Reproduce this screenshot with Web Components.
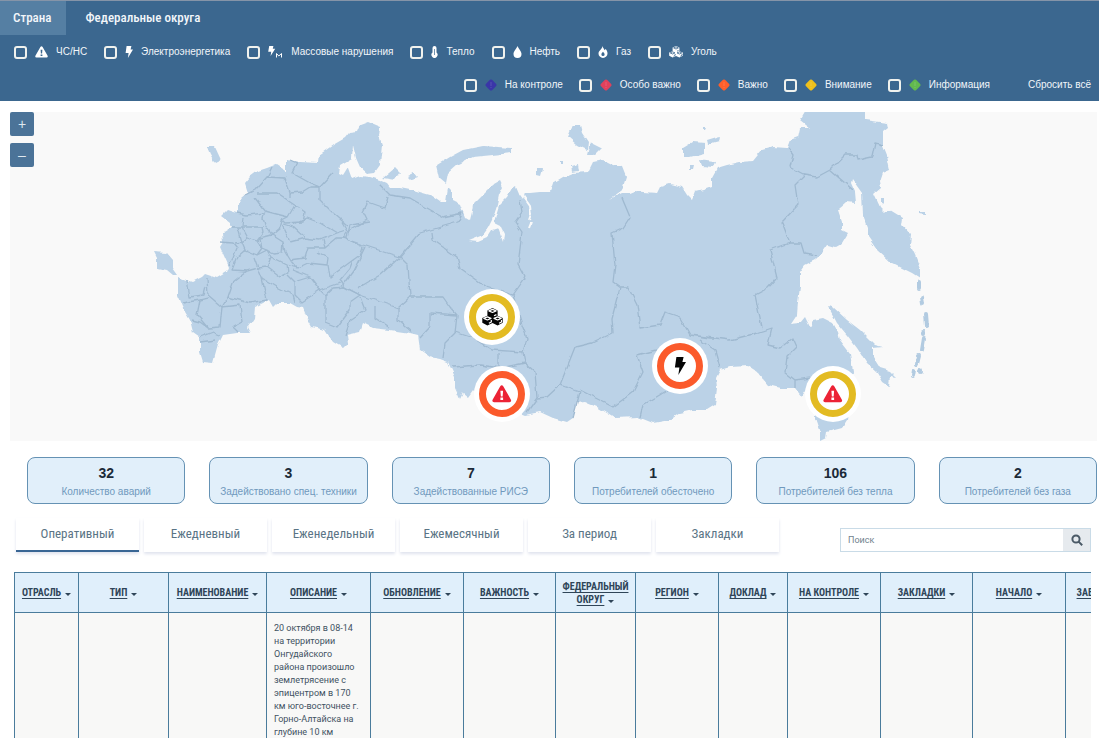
<!DOCTYPE html>
<html lang="ru">
<head>
<meta charset="utf-8">
<title>Карта аварий</title>
<style>
	html, body { margin: 0; height: 100%; }
	body {
		--narrow: "Roboto Condensed", "Liberation Sans Narrow", Roboto, sans-serif;
		--blue: #3b678f;
		background: #fff;
		font: 11px/14px "Liberation Sans", Arial, sans-serif;
	}
</style>
</head>
<body>
<energy-page>
	<page-header slot="header">
		<a slot="nav" href="#country" class="on">Страна</a>
		<a slot="nav" href="#districts">Федеральные округа</a>
		<filter-item slot="kinds" icon="warn">ЧС/НС</filter-item>
		<filter-item slot="kinds" icon="bolt">Электроэнергетика</filter-item>
		<filter-item slot="kinds" icon="mass">Массовые нарушения</filter-item>
		<filter-item slot="kinds" icon="heat">Тепло</filter-item>
		<filter-item slot="kinds" icon="oil">Нефть</filter-item>
		<filter-item slot="kinds" icon="gas">Газ</filter-item>
		<filter-item slot="kinds" icon="coal">Уголь</filter-item>
		<filter-item slot="levels" icon="level" tone="#3a36a8">На контроле</filter-item>
		<filter-item slot="levels" icon="level" tone="#e2405c">Особо важно</filter-item>
		<filter-item slot="levels" icon="level" tone="#ff5f2a">Важно</filter-item>
		<filter-item slot="levels" icon="level" tone="#eec01c">Внимание</filter-item>
		<filter-item slot="levels" icon="level" tone="#62b94e">Информация</filter-item>
	</page-header>

	<region-map slot="map">
		<map-pin x="482" y="205" icon="coal" ring="#e3bb22"></map-pin>
		<map-pin x="492" y="282" icon="warn" ring="#fb5a2b" tone="#ec2335"></map-pin>
		<map-pin x="670" y="254" icon="bolt" ring="#fb5a2b"></map-pin>
		<map-pin x="823" y="282" icon="warn" ring="#e3bb22" tone="#ec2335"></map-pin>
	</region-map>

	<stat-card slot="stats" value="32">Количество аварий</stat-card>
	<stat-card slot="stats" value="3">Задействовано спец. техники</stat-card>
	<stat-card slot="stats" value="7">Задействованные РИСЭ</stat-card>
	<stat-card slot="stats" value="1">Потребителей обесточено</stat-card>
	<stat-card slot="stats" value="106">Потребителей без тепла</stat-card>
	<stat-card slot="stats" value="2">Потребителей без газа</stat-card>

	<tab-button slot="tabs" class="on">Оперативный</tab-button>
	<tab-button slot="tabs">Ежедневный</tab-button>
	<tab-button slot="tabs">Еженедельный</tab-button>
	<tab-button slot="tabs">Ежемесячный</tab-button>
	<tab-button slot="tabs">За период</tab-button>
	<tab-button slot="tabs">Закладки</tab-button>

	<search-box slot="search"></search-box>
	<report-table slot="table"></report-table>
</energy-page>

<script>
"use strict";
/* == [ icons ] == each one is [ width, height, markup ] == */
const ICONS = {
	warn: [ 13, 12, `<path fill="currentColor" fill-rule="evenodd" d="M5.4 1Q6.5-.6 7.6 1L12.6 9.8Q13.2 11.4 11.6 11.5H1.4Q-.2 11.4.4 9.8ZM5.6 3.8L5.9 7.6H7.1L7.4 3.8ZM5.6 8.4V10H7.4V8.4Z"/>` ],
	bolt: [ 8, 12, `<path fill="currentColor" d="M1.6 0H6.4L5.6 3.4H8L2.9 12L3.6 7H.6Z"/>` ],
	mass: [ 15, 12, `<path fill="currentColor" d="M1.2 0H5.4L4.8 2.8H7.2L2.6 10L3.2 5.8H.2Z"/><path fill="none" stroke="currentColor" d="M8.5 11.5V7.5L10.8 10L13.5 7.5V11.5"/>` ],
	heat: [ 7, 12, `<path fill="currentColor" d="M1.5 2A2 2 0 0 1 5.5 2V6.6A3 3 0 1 1 1.5 6.6Z"/><path fill="none" stroke="var(--line, #3b678f)" stroke-width=".7" d="M3.5 3V9"/>` ],
	oil: [ 9, 12, `<path fill="currentColor" d="M4.5 0C5.5 3 8.5 5 8.5 8A4 4 0 0 1 .5 8C.5 5 3.5 3 4.5 0Z"/>` ],
	gas: [ 10, 12, `<path fill="currentColor" fill-rule="evenodd" d="M4.4 0C4.8 2 6.2 2.6 6.6 4.2L7.6 3C9 4.4 9.5 6 9.5 7.4A4.5 4.5 0 0 1 .5 7.4C.5 4.6 4.2 3.4 4.4 0ZM5 5.8C4.2 6.8 3.4 7.4 3.4 8.4A1.6 1.6 0 0 0 6.6 8.4C6.6 7.4 5.8 6.8 5 5.8Z"/>` ],
	coal: [ 14, 12, `<path fill="currentColor" d="M7 0L10.4 1.6V5.2L13.8 6.6V9.8L10.4 11.6L7 10L3.6 11.6L.2 9.8V6.6L3.6 5.2V1.6Z"/><path fill="none" stroke="var(--line, #3b678f)" stroke-width=".8" stroke-linejoin="round" d="M4.6 1.9L7 3L9.4 1.9L7 .9ZM8 5.2L9.6 4.4M1.2 6.9L3.6 8L6 6.9L3.6 5.9ZM4.6 10.2L6.2 9.3V8M8 6.9L10.4 8L12.8 6.9L10.4 5.9ZM11.4 10.2L13 9.3V8"/>` ],
	level: [ 12, 12, `<path fill="currentColor" d="M5 .8Q6 0 7 .8L11.2 5Q12 6 11.2 7L7 11.2Q6 12 5 11.2L.8 7Q0 6 .8 5Z"/><path fill="none" stroke="#fff" stroke-opacity=".15" d="M6 3V7M6 8V9"/>` ],
	search: [ 12, 12, `<path fill="none" stroke="currentColor" stroke-width="2" d="M8.6 5A3.6 3.6 0 1 1 1.4 5A3.6 3.6 0 1 1 8.6 5ZM7.6 7.6L11.2 11.2"/>` ]
};

const icon = ( name, scale = 1 ) => {
	const [ w, h, body ] = ICONS[ name ];
	return `<svg width="${ w * scale }" height="${ h * scale }" viewBox="0 0 ${ w } ${ h }" aria-hidden="true">${ body }</svg>`;
};

/* open a shadow root on el and fill it */
const paint = ( el, html ) => {
	const tpl = document.createElement( "template" );
	tpl.innerHTML = html;
	el.attachShadow( { mode: "open" } ).append( tpl.content.cloneNode( true ) );
};

/* == [ page frame ] == */
class EnergyPage extends HTMLElement {
	constructor() {
		super();
		paint( this, `
		<style>
			:host { display: flex; flex-direction: column; height: 100vh; overflow: hidden; }
			.map { padding: 11px 2px 0 10px; }
			.stats { display: flex; gap: 24px; padding: 16px 2px 0 27px; }
			.bar { display: flex; align-items: flex-end; justify-content: space-between; gap: 24px; padding: 14px 8px 0 16px; }
			.tabs { display: flex; gap: 5px; }
			.table { flex: 1; min-height: 0; overflow: hidden; margin: 20px 8px 15px 14px; }
			::slotted(stat-card) { flex: 1; }
		</style>
		<slot name="header"></slot>
		<div class="map"><slot name="map"></slot></div>
		<div class="stats"><slot name="stats"></slot></div>
		<div class="bar">
			<div class="tabs"><slot name="tabs"></slot></div>
			<slot name="search"></slot>
		</div>
		<div class="table"><slot name="table"></slot></div>` );
	}
}

/* == [ header ] == */
class PageHeader extends HTMLElement {
	constructor() {
		super();
		paint( this, `
		<style>
			:host { display: block; box-sizing: border-box; background: var(--blue); border-top: 1px solid #8594a8; color: #f2f6fa; padding-bottom: 9px; }
			nav { display: flex; gap: 6px; }
			::slotted(a) { padding: 9px 13px; font: 500 13px/16px var(--narrow); color: #f2f6fa; text-decoration: none; }
			::slotted(a.on) { background: #557fa3; padding-right: 15px; }
			.row { display: flex; gap: 16px; align-items: center; }
			.kinds { gap: 17px; padding: 10px 14px 0; }
			.levels { justify-content: flex-end; padding: 19px 8px 0; }
			button { all: unset; cursor: pointer; margin-left: 22px; font-size: 10px; line-height: 14px; }
		</style>
		<nav><slot name="nav"></slot></nav>
		<div class="row kinds"><slot name="kinds"></slot></div>
		<div class="row levels"><slot name="levels"></slot><button type="button">Сбросить всё</button></div>` );
	}
}

class FilterItem extends HTMLElement {
	constructor() {
		super();
		const tone = this.getAttribute( "tone" ) || "#fff";
		paint( this, `
		<style>
			:host { display: block; font-size: 10px; line-height: 14px; }
			label { display: flex; align-items: center; gap: 8px; white-space: nowrap; cursor: pointer; }
			input { appearance: none; box-sizing: border-box; width: 13px; height: 13px; margin: 0; border: 2px solid #f0f2ee; border-radius: 3px; }
			input:checked { background: #f0f2ee; }
			svg { display: block; color: ${ tone }; }
		</style>
		<label><input type="checkbox">${ icon( this.getAttribute( "icon" ) ) }<span><slot></slot></span></label>` );
	}
}

/* == [ map ] == */
class RegionMap extends HTMLElement {
	constructor() {
		super();
		paint( this, `
		<style>
			:host { display: block; position: relative; background: #f9f9f9; }
			svg { display: block; width: 100%; height: auto; }
			.land { fill: #bbd2e7; }
			.borders { fill: none; stroke: #9fb9d0; stroke-width: 1.3; stroke-linejoin: round; }
			.isles { fill: none; stroke: #b2cbe1; stroke-width: 4; stroke-linecap: round; }
			.zoom { position: absolute; top: 0; left: 0; display: flex; flex-direction: column; gap: 7px; }
			.zoom button { width: 24px; height: 24px; padding: 0; border: 0; border-radius: 2px; background: #4b7398; color: #dfe8f0; font: 14px/24px "Liberation Sans", sans-serif; }
		</style>
		<svg viewBox="10 112 1087 329" role="img" aria-label="Карта России">
			<filter id="rough" x="-5%" y="-5%" width="110%" height="110%" color-interpolation-filters="sRGB">
				<feTurbulence type="fractalNoise" baseFrequency=".14" numOctaves="1" seed="4"/>
				<feDisplacementMap in="SourceGraphic" scale="5" xChannelSelector="R" yChannelSelector="G"/>
			</filter>
			<g filter="url(#rough)">
				<g class="land">
					<path d="M178 277L192 282 202 277 205 274 217 278 227 272 229 267 225 258 220 247 223 242 222 233 232 227 230 223 221 216 227 210 233 212 237 213 237 205 242 198 248 193 245 183 250 177 258 171 267 168 277 164 283 168 286 173 286 160 300 162 318 163 319 155 333 145 345 138 349 133 357 132 360 125 368 122 380 127 379 135 382 145 380 165 375 172 367 173 360 167 356 158 353 145 352 158 340 165 339 174 343 176 348 168 352 179 360 176 370 177 380 180 387 183 390 187 400 187 410 189 423 193 430 195 440 202 446 202 448 188 452 192 452 200 460 204 465 217 470 220 472 212 473 205 483 195 493 185 500 181 503 187 499 195 497 205 492 220 488 228 483 235 468 241 478 242 487 238 492 230 498 228 503 242 504 233 500 225 494 222 499 205 507 197 512 188 515 186 518 193 523 200 525 193 530 193 540 192 550 192 553 183 563 177 573 173 588 172 593 162 603 160 613 165 622 167 626 177 623 187 620 192 610 199 622 193 630 193 635 191 643 192 657 193 660 187 670 184 682 187 687 195 692 200 695 192 703 190 712 187 712 177 717 168 727 165 740 162 753 161 762 150 773 147 787 148 790 140 798 137 800 128 810 128 800 120 807 108 865 108 865 120 887 123 888 128 883 132 883 145 887 155 890 170 883 173 880 182 881 188 874 194 880 207 885 212 890 210 903 218 902 225 911 235 910 245 915 255 920 268 920 278 912 273 890 262 877 250 868 237 868 228 863 215 862 193 852 179 851 183 855 192 856 203 847 202 838 210 842 222 842 230 848 233 842 243 835 247 828 245 823 252 815 260 805 265 800 272 800 287 798 302 797 315 791 324 800 323 805 317 810 327 813 320 823 318 833 323 838 332 840 340 850 353 853 372 850 400 847 420 842 428 827 432 826 438 820 441 820 433 815 418 815 400 810 385 802 397 795 388 780 388 768 385 757 372 748 366 730 367 720 370 716 378 717 388 715 405 707 410 693 410 680 413 670 420 653 423 638 417 615 418 607 413 597 407 585 402 577 403 573 418 567 422 553 418 540 412 525 415 500 405 480 398 473 390 468 397 463 393 460 399 455 388 455 377 448 362 440 359 430 357 420 350 418 335 410 333 390 330 373 328 363 323 360 332 347 335 348 343 343 348 333 342 325 330 312 327 307 318 303 308 297 307 290 303 277 303 273 307 269 300 255 307 254 318 248 327 251 333 237 333 223 335 218 345 213 363 203 362 200 352 200 337 193 332 190 320 182 307 178 297Z"/>
					<path d="M828 306L833 307 847 320 860 330 875 345 883 347 873 348 873 357 880 368 890 371 896 377 890 376 889 386 883 382 877 372 867 363 857 348 847 335 837 323Z"/>
					<path d="M437 165L450 157 463 150 483 146 512 148 512 153 493 155 473 157 457 165 448 173 446 183 440 178Z"/>
					<path d="M383 178L395 168 400 173 395 180ZM408 176L414 173 418 178 412 180Z"/>
					<path d="M573 125L580 125 582 133 588 142 587 150 577 145 568 137ZM590 142L602 148 595 155 587 154Z"/>
					<path d="M683 148L693 142 705 143 705 153 690 157 683 157ZM707 140L720 136 719 141 708 144ZM700 160L715 162 713 167 702 166ZM689 166L693 166 692 170 689 170ZM702 128L706 128 705 130 702 130Z"/>
					<path d="M207 147L215 147 221 160 215 163 210 154Z"/>
					<path d="M154 252L167 253 173 260 173 268 178 275 173 275 167 270 157 268 157 258Z"/>
					<path d="M537 169L543 169 541 176 537 175ZM571 166L578 164 579 171 572 172ZM560 161L563 161 563 164 560 164ZM881 198L884 198 884 205 881 204ZM918 211L926 211 926 214 918 213Z"/>
				</g>
				<path class="isles" d="M919 281V289M922 297L923 304M926 314L927 326M923 332V334M924 338L922 350M919 356L917 364M914 370L913 376M920 370V371"/>
				<path fill="none" stroke="#f9f9f9" stroke-width="2" d="M523 196L530 206 531 214 529 220M531 223L529 228"/>
				<path class="borders" d="M245 195L255 190 267 177 285 178 290 192 290 198M267 177L272 167M257 193L277 193 295 205 288 217 265 211 255 198M290 160L297 163 292 173 310 183 320 187 333 173M290 193L302 192 310 187 320 187 320 200 333 213 347 225M295 205L305 212 303 222 285 223 282 220 288 217M265 211L263 218 265 225 272 235 280 228 282 221M237 213L247 215 265 213M232 227L242 227 243 217M242 227H263M242 227L248 238 257 241 263 233 262 227M248 238L242 243 245 250 257 255 262 248 257 241M262 248L260 238 272 235 283 242 282 252 273 253ZM220 242L233 243 237 248 233 258 229 265M235 243L242 242 238 228M245 250L237 257 232 270 247 271 258 268 254 257M257 255L267 250 271 257 267 267 258 268M271 257L287 265 288 273 280 277 267 267M258 268L262 278 277 287 293 295 295 303M247 271L233 282 228 297 250 303 267 300 262 278M207 278L208 295 222 307 228 297M222 307L220 327 208 328 197 315 200 300 208 298M222 307L240 305 242 322 233 327 238 332M187 280L190 297 203 295 205 287M182 303L200 300M192 320L200 322 208 328M200 337L213 332 220 335M200 342L215 340M282 225L290 242 305 238 293 227 283 224M293 225L307 218 320 223 337 233 320 240 305 238M337 233L347 230 342 222M283 242L285 252 290 260 305 258 308 248 325 248 323 240M290 260L297 268 287 265M297 268L308 263 327 265 328 258 318 252M293 270L310 277 320 290 302 302 295 295 295 282 288 275M310 277L297 281M328 265L330 277 353 260 350 268 340 280 345 287M320 290L325 295 325 322 337 327 350 310 350 302 360 295 345 287 333 288 325 295M320 290L340 283M325 248L337 238 347 238 350 225 370 222M345 238L363 247 360 255 353 260"/>
				<path class="borders" d="M380 185L390 195 410 198 427 208 443 217 462 213 458 222 420 233 400 257 408 265 410 297 398 308 360 295 340 285M388 197L385 208 368 202 363 212 367 220 347 232 343 238 363 245 400 257 380 275 358 288M365 247L353 272 345 283M432 232L433 240 457 257 460 268 487 287 513 295 525 278 518 265 522 232 515 222 522 212 520 200M410 297L443 297 450 307 457 315 430 313 430 327 420 338M398 308V320L412 332M375 305V318L390 328M360 297L365 310 350 320 345 335M457 315L455 333 445 343 443 358M455 332L473 338 492 350 523 352 527 338 522 325 513 295M452 367L480 365 500 368 525 363 523 352M498 353V368M525 363L535 372 537 398 527 412M537 398L547 397 560 385 580 392 573 418M560 385L575 347 592 343 613 333 612 318 620 287 613 282 615 265 612 233 623 228 630 217 622 198M620 287L628 287 637 305 640 328 660 325 665 312 680 317 690 335 710 338M580 390L613 407 633 392 643 372 637 355 657 350M640 417L643 405 673 387M690 335L730 340 757 333 772 328 768 345 780 348 793 338 797 347 787 357 785 372 795 380 810 378M795 380V388M700 340L715 350 720 368M762 328L755 295 768 288 777 278 770 250 790 243 782 222 798 205 795 185 805 175 790 167 793 155 788 148M805 175L817 177 830 170 853 190M830 170L845 155 857 155 858 160 872 157 875 143 883 145M790 243L802 243 805 253 817 255"/>
			</g>
		</svg>
		<div class="zoom">
			<button type="button" aria-label="Приблизить">+</button>
			<button type="button" aria-label="Отдалить">–</button>
		</div>
		<slot></slot>` );
	}
}

/* a marker; x and y are in map units, 1087 by 329 */
class MapPin extends HTMLElement {
	constructor() {
		super();
		const get = v => this.getAttribute( v );
		paint( this, `
		<style>
			:host {
				position: absolute; left: ${ get( "x" ) / 1087 * 100 }%; top: ${ get( "y" ) / 329 * 100 }%;
				transform: translate( -50%, -50% ); --line: #fff;
			}
			button {
				display: flex; align-items: center; justify-content: center; box-sizing: border-box;
				width: 46px; height: 46px; padding: 0; border: 7px solid ${ get( "ring" ) }; border-radius: 50%;
				background: #fff; color: ${ get( "tone" ) || "#050505" }; box-shadow: 0 0 0 5px #fff;
			}
		</style>
		<button type="button" aria-label="Событие">${ icon( get( "icon" ), 1.5 ) }</button>` );
	}
}

/* == [ stats ] == */
class StatCard extends HTMLElement {
	constructor() {
		super();
		paint( this, `
		<style>
			:host {
				display: block; box-sizing: border-box; min-width: 0; padding: 7px 4px 4px; text-align: center;
				background: #e1effa; border: 1px solid #6592b4; border-radius: 8px; color: #7099bd;
				font-size: 10px; line-height: 14px; white-space: nowrap;
			}
			b { display: block; margin-bottom: 4px; font-size: 14px; line-height: 16px; color: #1b2a38; }
		</style>
		<b>${ this.getAttribute( "value" ) }</b><slot></slot>` );
	}
}

/* == [ tabs and search ] == */
class TabButton extends HTMLElement {
	constructor() {
		super();
		paint( this, `
		<style>
			:host { display: block; }
			button {
				width: 123px; padding: 8px 0; border: 0; border-bottom: 2px solid transparent; background: #fff;
				font: 13px/16px var(--narrow); color: #5a7485; box-shadow: 0 2px 3px #dfe3ee;
			}
			:host(.on) button { border-bottom-color: #396694; }
		</style>
		<button type="button"><slot></slot></button>` );
	}
}

class SearchBox extends HTMLElement {
	constructor() {
		super();
		paint( this, `
		<style>
			:host { display: block; flex: 0 1 251px; }
			form { display: flex; height: 24px; box-sizing: border-box; border: 1px solid #c9dbe7; }
			input { flex: 1; min-width: 0; padding: 0 7px; border: 0; background: #fff; font: 9px/14px Roboto, sans-serif; }
			input::placeholder { color: #71828e; }
			button { display: flex; align-items: center; justify-content: center; width: 27px; padding: 0; border: 0; background: #e6eaee; color: #4a5966; }
		</style>
		<form>
			<input type="text" placeholder="Поиск" aria-label="Поиск">
			<button type="button" aria-label="Найти">${ icon( "search" ) }</button>
		</form>` );
	}
}

/* == [ report table ] == */
const COLUMNS = [
	[ "Отрасль", 64 ], [ "Тип", 90 ], [ "Наименование", 98 ], [ "Описание", 104 ],
	[ "Обновление", 93 ], [ "Важность", 92 ], [ "Федеральный округ", 80 ], [ "Регион", 83 ],
	[ "Доклад", 69 ], [ "На контроле", 93 ], [ "Закладки", 92 ], [ "Начало", 93 ], [ "Завершение", 90 ]
];
const ROW = {
	"Описание": "20 октября в 08-14 на территории Онгудайского района произошло землетрясение с эпицентром в 170 км юго-восточнее г. Горно-Алтайска на глубине 10 км"
};

class ReportTable extends HTMLElement {
	constructor() {
		super();
		paint( this, `
		<style>
			:host { display: block; }
			table { table-layout: fixed; width: 1141px; border-collapse: collapse; }
			th, td { box-sizing: border-box; border: 1px solid #4a7c9c; }
			th { height: 40px; padding: 0 6px; background: #e0effb; font: bold 10px/13px var(--narrow); color: #2f4558; text-transform: uppercase; }
			th button { all: unset; cursor: pointer; }
			th u { text-underline-offset: 2px; }
			th i { display: inline-block; margin-left: 4px; border: 3px solid transparent; border-top-color: #2f4558; border-bottom: 0; }
			td { height: 150px; padding: 9px 7px; background: #f8f8f7; vertical-align: top; font: 9px/13px Roboto, sans-serif; color: #3f5262; }
		</style>
		<table>
			<colgroup>${ COLUMNS.map( ( [ , w ] ) => `<col style="width:${ w }px">` ).join( "" ) }</colgroup>
			<thead><tr>${ COLUMNS.map( ( [ name ] ) => `<th scope="col"><button type="button"><u>${ name }</u><i></i></button></th>` ).join( "" ) }</tr></thead>
			<tbody><tr>${ COLUMNS.map( ( [ name ] ) => `<td>${ ROW[ name ] || "" }</td>` ).join( "" ) }</tr></tbody>
		</table>` );
	}
}

customElements.define( "energy-page", EnergyPage );
customElements.define( "page-header", PageHeader );
customElements.define( "filter-item", FilterItem );
customElements.define( "region-map", RegionMap );
customElements.define( "map-pin", MapPin );
customElements.define( "stat-card", StatCard );
customElements.define( "tab-button", TabButton );
customElements.define( "search-box", SearchBox );
customElements.define( "report-table", ReportTable );
</script>
</body>
</html>
